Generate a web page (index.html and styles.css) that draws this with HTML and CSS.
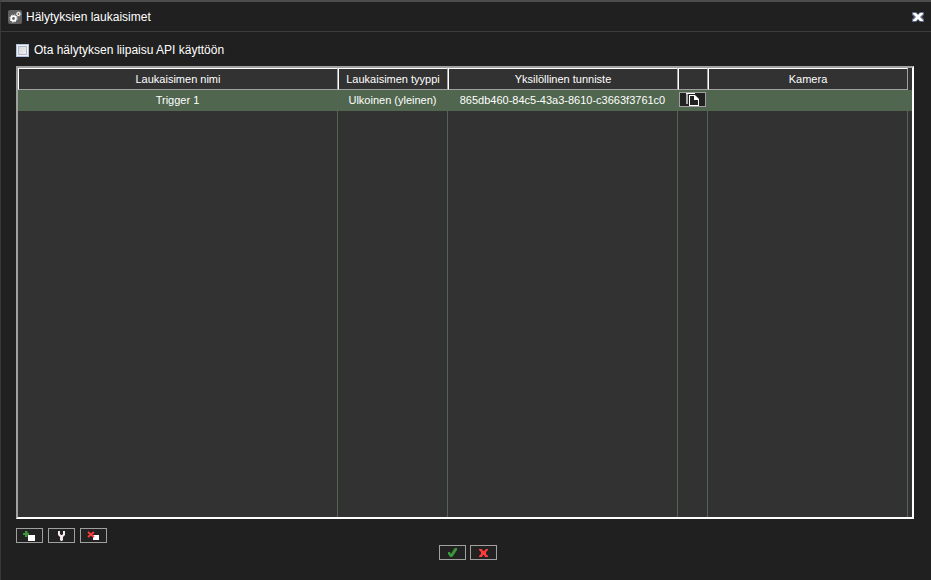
FILE: index.html
```html
<!DOCTYPE html>
<html lang="fi">
<head>
    <meta charset="UTF-8">
    <title>Hälytyksien laukaisimet</title>
    <link rel="stylesheet" href="styles.css">
</head>
<body>
<div class="dialog">
    <header class="titlebar">
        <svg class="logo" width="14" height="14" viewBox="0 0 14 14">
            <rect width="14" height="14" rx="2" fill="#606060"/>
            <circle cx="5.5" cy="8.5" r="2.3" fill="none" stroke="#fff" stroke-width="1.8"/>
            <circle cx="5.5" cy="8.5" r="3.6" fill="none" stroke="#fff" stroke-width="1" stroke-dasharray="1.4 1.43"/>
            <circle cx="10.5" cy="4" r="1.5" fill="none" stroke="#fff" stroke-width="1.2"/>
            <circle cx="10.5" cy="4" r="2.2" fill="none" stroke="#ddd" stroke-width=".7" stroke-dasharray="1 .73"/>
        </svg>
        <h1>Hälytyksien laukaisimet</h1>
        <button class="close" type="button" aria-label="Sulje">
            <svg width="12" height="10" viewBox="0 0 12 10">
                <path d="M0 0h4l2 2 2-2h4v3l-2 2 2 2v3H8L6 8l-2 2H0V7l2-2-2-2z" fill="#5d6883"/>
                <path d="M1 1h3l2 2 2-2h3v1L8 5l3 3v1H8L6 7 4 9H1V8l3-3-3-3z" fill="#fff"/>
            </svg>
        </button>
    </header>

    <main class="content">
        <label class="enable">
            <input type="checkbox">
            Ota hälytyksen liipaisu API käyttöön
        </label>

        <div class="list">
            <table class="triggers">
                <colgroup>
                    <col>
                    <col class="col-type">
                    <col class="col-id">
                    <col class="col-copy">
                    <col class="col-camera">
                    <col class="col-rest">
                </colgroup>
                <thead>
                    <tr>
                        <th>Laukaisimen nimi</th>
                        <th>Laukaisimen tyyppi</th>
                        <th>Yksilöllinen tunniste</th>
                        <th></th>
                        <th>Kamera</th>
                        <td></td>
                    </tr>
                </thead>
                <tbody>
                    <tr class="selected">
                        <td>Trigger 1</td>
                        <td>Ulkoinen (yleinen)</td>
                        <td>865db460-84c5-43a3-8610-c3663f3761c0</td>
                        <td>
                            <button class="btn copy" type="button" aria-label="Kopioi">
                                <svg width="15" height="13" viewBox="0 0 15 13">
                                    <path d="M1 0h2v11H1z" fill="#a8a8a8"/>
                                    <path d="M1 0h9v1H1z" fill="#fff"/>
                                    <path d="M4 2h6l4 4v7H4z" fill="#fff"/>
                                    <path d="M5 3h4v4h4v5H5z" fill="#222"/>
                                    <path d="M4 2h1v11H4z" fill="#fff"/>
                                </svg>
                            </button>
                        </td>
                        <td></td>
                        <td></td>
                    </tr>
                    <tr class="empty">
                        <td></td><td></td><td></td><td></td><td></td><td></td>
                    </tr>
                </tbody>
            </table>
        </div>

        <div class="tools">
            <button class="btn" type="button" aria-label="Lisää">
                <svg width="13" height="11" viewBox="0 0 13 11">
                    <path d="M2 1h2.5v2H6v2H4.500v2H2V5H0V3h2z" fill="#3c963c"/>
                    <path d="M5 5h7v6H5z" fill="#fff"/>
                </svg>
            </button>
            <button class="btn" type="button" aria-label="Muokkaa">
                <svg width="9" height="11" viewBox="0 0 9 11">
                    <path d="M1 1h2v3l1 1h1l1-1V1h2v4L6 7v3l-1 1H4l-1-1V7L1 5z" fill="#f5e9e9"/>
                </svg>
            </button>
            <button class="btn" type="button" aria-label="Poista">
                <svg width="13" height="11" viewBox="0 0 13 11">
                    <path d="M6 5h6v5H6z" fill="#fff"/>
                    <path d="M1 2l6 5M7 2L1 7" stroke="#ff3c3c" stroke-width="1.8"/>
                </svg>
            </button>
        </div>
        <div class="actions">
            <button class="btn" type="button" aria-label="OK">
                <svg width="9" height="9" viewBox="0 0 9 9">
                    <path d="M0 4h2l1 2 3-5 1-1h2v2L5 8 4 9H2L0 6z" fill="#3c963c"/>
                </svg>
            </button>
            <button class="btn" type="button" aria-label="Peruuta">
                <svg width="9" height="9" viewBox="0 0 9 9">
                    <path d="M0 1h3l1 2h1l2-2h2v1L7 4v2l2 2v1H6L5 7H4L3 9H0V8l2-2V4L0 2z" fill="#ff3c3c"/>
                </svg>
            </button>
        </div>
    </main>
</div>
</body>
</html>
```
FILE: styles.css
```css
* {
    box-sizing: border-box;
    margin: 0;
    padding: 0;
}

body {
    background-color: #202020;
    color: #fff;
    font: 11px/14px "Liberation Sans", Arial, sans-serif;
}

svg {
    display: block;
}

.dialog {
    display: flex;
    flex-direction: column;
    height: 100vh;
    border-top: 2px solid #4c4c4c;
    border-left: 1px solid #383838;
}

/* title bar */
.titlebar {
    display: flex;
    align-items: center;
    gap: 4px;
    height: 30px;
    padding: 0 7px;
    border-bottom: 1px solid #3c3c3c;
}

.titlebar h1 {
    flex: 1;
    font-size: 12px;
    font-weight: normal;
}

.close {
    border: none;
    background: none;
}

/* content */
.content {
    flex: 1;
    display: flex;
    flex-direction: column;
    min-height: 0;
    padding: 11px 17px 20px 15px;
}

.enable {
    display: flex;
    align-items: center;
    align-self: flex-start;
    gap: 5px;
    margin-bottom: 9px;
    font-size: 12px;
}

.enable input {
    appearance: none;
    width: 13px;
    height: 13px;
    border: 1px solid #b4c3e1;
    background: linear-gradient(135deg, #d2d2d7, #f5f5f5);
    box-shadow: inset 0 0 0 1px #eef1fa, inset 0 0 0 2px #b4b9c8;
}

.enable input:checked {
    background: #3c963c;
}

/* trigger list */
.list {
    flex: 1;
    min-height: 0;
    border: 2px solid;
    border-color: #a0a0a0 #fff #fff #a0a0a0;
    background-color: #323232;
}

.triggers {
    width: 100%;
    height: 100%;
    table-layout: fixed;
    border-spacing: 0;
}

.col-type {
    width: 110px;
}

.col-id {
    width: 230px;
}

.col-copy {
    width: 30px;
}

.col-camera {
    width: 200px;
}

.col-rest {
    width: 4px;
}

.triggers th {
    height: 22px;
    border: 1px solid;
    border-color: #fff #a0a0a0 #a0a0a0 #fff;
    font-weight: normal;
}

.triggers td {
    border-right: 1px solid #556455;
    text-align: center;
    white-space: nowrap;
}

.triggers td:last-child {
    border-right: none;
}

.selected td {
    height: 21px;
    padding-bottom: 2px;
    background-color: #50664e;
}

.empty td {
    height: 100%;
}

/* buttons */
.btn {
    display: flex;
    align-items: center;
    justify-content: center;
    width: 27px;
    height: 15px;
    border: 1px solid #a0a0a0;
    background-color: #222;
}

.copy {
    margin: 0 auto;
}

.tools {
    display: flex;
    gap: 5px;
    margin-top: 9px;
}

.actions {
    display: flex;
    justify-content: center;
    gap: 4px;
    margin-top: 2px;
    padding-left: 6px;
}
```
